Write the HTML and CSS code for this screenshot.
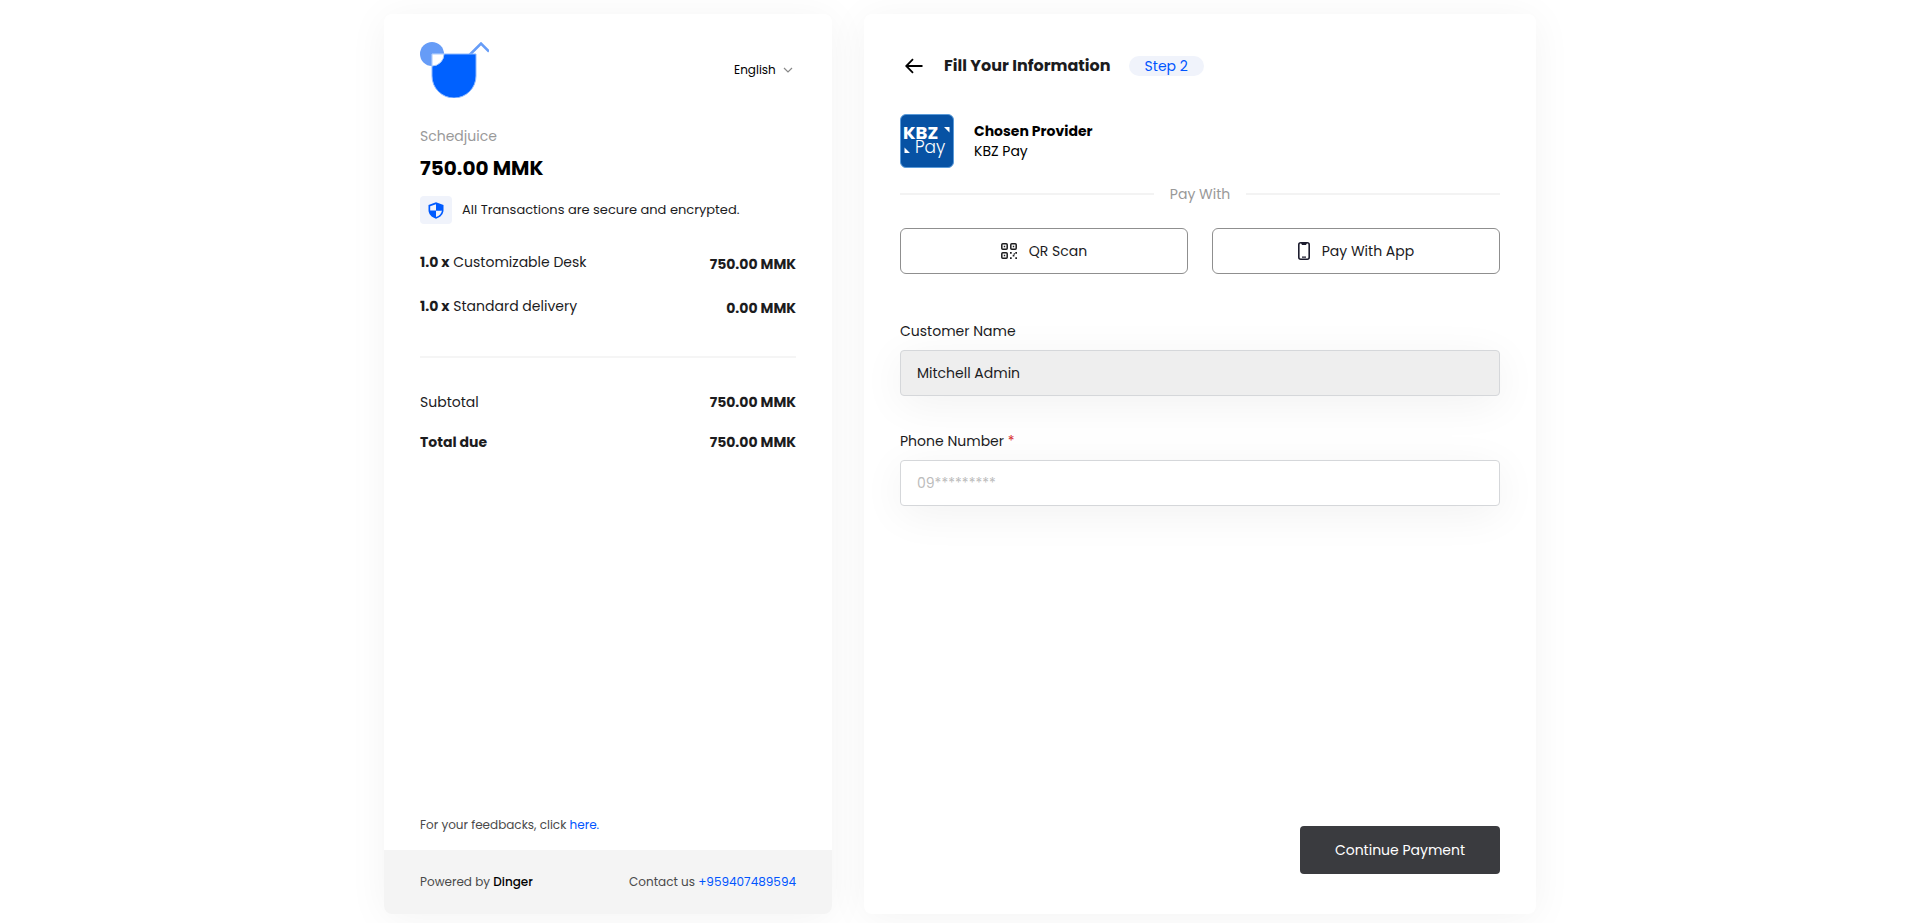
FILE: index.html
```html
<!DOCTYPE html>
<html lang="en">
<head>
<meta charset="utf-8">
<meta name="viewport" content="width=device-width, initial-scale=1">
<title>Checkout</title>
<link rel="stylesheet" href="styles.css">
</head>
<body>
<div class="checkout">
  <aside class="card summary">
    <div class="summary-main">
      <header class="summary-head">
        <svg class="brand" viewBox="0 0 69 56" role="img" aria-label="Schedjuice">
          <circle cx="12" cy="12" r="12" fill="#669cf7"/>
          <path d="M49 13.500 61 1.500 69 9.500" fill="none" stroke="#669cf7" stroke-width="2.500"/>
          <path d="M12 12H56V34a22 22 0 0 1-44 0Z" fill="#0061ff" stroke="#8db9ff" stroke-width="1"/>
          <path d="M12 12H24A12 12 0 0 1 12 24Z" fill="#fff" stroke="#a8c8fb" stroke-width="1"/>
        </svg>
        <div class="language">
          <select class="language-select" aria-label="Language"><option>English</option></select>
          <svg class="language-arrow" viewBox="0 0 10 10" aria-hidden="true"><path d="M1 3l4 4 4-4" fill="none" stroke="#888" stroke-width="1.200"/></svg>
        </div>
      </header>
      <p class="merchant">Schedjuice</p>
      <p class="amount">750.00 MMK</p>
      <div class="secure">
        <span class="secure-badge">
          <svg class="secure-icon" viewBox="0 0 16 17" aria-hidden="true"><path d="M8 .3 15.500 3V8c0 4-3 7.300-7.500 8.700C3.500 15.300.500 12 .500 8V3Z" fill="#005bff"/><path d="M8 2.200V8.500H14C13.500 11.500 11.500 13.800 8 15V8.500H2.200V4.200Z" fill="#f0f3fb"/><path d="M8 2.200V8.500H13.800V4.200Z" fill="#005bff"/></svg>
        </span>
        <span class="secure-text">All Transactions are secure and encrypted.</span>
      </div>
      <ul class="items">
        <li class="row"><span><b>1.0 x</b> Customizable Desk</span><b class="item-price">750.00 MMK</b></li>
        <li class="row"><span><b>1.0 x</b> Standard delivery</span><b class="item-price">0.00 MMK</b></li>
      </ul>
      <hr class="rule">
      <div class="totals">
        <div class="row"><span>Subtotal</span><b>750.00 MMK</b></div>
        <div class="row"><b>Total due</b><b>750.00 MMK</b></div>
      </div>
      <p class="feedback">For your feedbacks, click <a class="link" href="#">here.</a></p>
    </div>
    <footer class="summary-foot">
      <span>Powered by <strong class="dinger">Dinger</strong></span>
      <span>Contact us <a class="link" href="tel:+959407489594">+959407489594</a></span>
    </footer>
  </aside>

  <main class="card details">
    <header class="details-head">
      <button class="back" type="button" aria-label="Back">
        <svg class="back-icon" viewBox="0 0 18 16" aria-hidden="true"><path d="M17.500 8H1.500M8 1.200 1.200 8 8 14.800" fill="none" stroke="#000" stroke-width="1.800"/></svg>
      </button>
      <h1 class="title">Fill Your Information</h1>
      <span class="step">Step 2</span>
    </header>
    <section class="provider">
      <svg class="provider-logo" viewBox="0 0 54 54" role="img" aria-label="KBZ Pay">
        <rect x=".5" y=".5" width="53" height="53" rx="5.500" fill="#0752a4" stroke="#5b9bd9"/>
        <text class="logo-kbz" x="3" y="25">KBZ</text>
        <text class="logo-pay" x="15" y="39">Pay</text>
        <path d="M44 13H49.500V18.500ZM4.500 33.500 10 39H4.500Z" fill="#fff"/>
      </svg>
      <div>
        <h2 class="provider-title">Chosen Provider</h2>
        <p class="provider-name">KBZ Pay</p>
      </div>
    </section>
    <div class="divider">Pay With</div>
    <div class="methods">
      <button class="method" type="button">
        <svg class="qr-icon" viewBox="0 0 16 16" aria-hidden="true">
          <g fill="none" stroke="#1c1c1e" stroke-width="1.500"><rect x=".8" y=".8" width="5.400" height="5.400" rx="1"/><rect x="9.800" y=".8" width="5.400" height="5.400" rx="1"/><rect x=".8" y="9.800" width="5.400" height="5.400" rx="1"/></g>
          <path d="M2.800 2.800h1.400v1.400H2.800ZM11.800 2.800h1.400v1.400h-1.400ZM2.800 11.800h1.400v1.400H2.800ZM9 9h1.700v1.700H9ZM14.300 9H16v1.700h-1.700ZM11.700 11.700h1.700v1.700h-1.700ZM9 14.300h1.700V16H9ZM14.300 14.300H16V16h-1.700ZM12.700 10.300h1.300v1.300h-1.300Z" fill="#1c1c1e"/>
        </svg>
        QR Scan
      </button>
      <button class="method" type="button">
        <svg class="phone-icon" viewBox="0 0 12 18" aria-hidden="true"><rect x=".8" y=".8" width="10.400" height="16.400" rx="2" fill="none" stroke="#1c1c2e" stroke-width="1.600"/><path d="M3 1h6l-1 2H4ZM4 14.500h4v1.300H4Z" fill="#1c1c2e"/></svg>
        Pay With App
      </button>
    </div>
    <form class="form">
      <div class="field">
        <label class="label" for="name">Customer Name</label>
        <input class="input" id="name" type="text" value="Mitchell Admin" disabled>
      </div>
      <div class="field">
        <label class="label" for="phone">Phone Number <span class="required">*</span></label>
        <input class="input" id="phone" type="tel" placeholder="09*********">
      </div>
      <button class="submit" type="submit">Continue Payment</button>
    </form>
  </main>
</div>
</body>
</html>
```
FILE: styles.css
```css
* { box-sizing: border-box; }
body {
  margin: 0;
  background: #fff;
  color: #1c1c1e;
  font: 14px/20px Poppins, Inter, "Liberation Sans", sans-serif;
}
p, h1, h2, ul { margin: 0; padding: 0; }
button, input, select { font: inherit; color: inherit; }
b { font-weight: 700; }
.checkout {
  display: grid;
  grid-template-columns: 2fr 3fr;
  gap: 32px;
  width: 60%;
  min-height: 100vh;
  margin: 0 auto;
  padding: 14px 0 9px;
}
.card {
  display: flex;
  flex-direction: column;
  background: #fff;
  border-radius: 8px;
  box-shadow: 0 4px 40px rgba(0, 0, 0, .05);
}
.summary-main {
  display: flex;
  flex: 1;
  flex-direction: column;
  padding: 28px 36px 15px;
}
.summary-head {
  display: flex;
  align-items: center;
  justify-content: space-between;
}
.brand { width: 69px; height: 56px; }
.language { display: grid; align-items: center; font-size: 12px; color: #000; }
.language-select {
  grid-area: 1 / 1;
  appearance: none;
  border: 0;
  background: none;
  padding: 0 20px 0 0;
}
.language-arrow {
  grid-area: 1 / 1;
  justify-self: end;
  width: 10px;
  height: 10px;
  margin-right: 3px;
  pointer-events: none;
}
.merchant { margin-top: 28px; color: #999; }
.amount { margin-top: 8px; font-size: 20px; line-height: 28px; font-weight: 700; color: #000; }
.secure { display: flex; align-items: center; gap: 10px; margin-top: 14px; font-size: 13px; }
.secure-badge {
  display: grid;
  place-items: center;
  width: 32px;
  height: 28px;
  border-radius: 4px;
  background: #f0f3fb;
}
.secure-icon { width: 16px; height: 17px; }
.items { display: grid; gap: 22px; margin-top: 28px; list-style: none; }
.row { display: flex; justify-content: space-between; }
.item-price { padding-top: 2px; }
.rule { width: 100%; height: 2px; margin: 38px 0 34px; border: 0; background: #f5f5f5; }
.totals { display: grid; gap: 20px; }
.feedback { margin-top: auto; font-size: 12px; color: #4a4a4a; }
.link { color: #0055ff; text-decoration: none; }
.summary-foot {
  display: flex;
  align-items: center;
  justify-content: space-between;
  min-height: 64px;
  padding: 0 36px;
  border-radius: 0 0 8px 8px;
  background: #f4f4f4;
  color: #4a4a4a;
  font-size: 12px;
}
.dinger { font-weight: 500; color: #000; }
.details { padding: 40px 36px; }
.details-head { display: flex; align-items: center; height: 24px; }
.back { display: grid; place-items: center; width: 28px; height: 24px; padding: 0; border: 0; background: none; }
.back-icon { width: 18px; height: 16px; }
.title { margin-left: 16px; font-size: 16px; font-weight: 700; }
.step { margin-left: 18px; padding: 0 16px; border-radius: 10px; background: #f0f3fb; color: #0055ff; }
.provider { display: flex; align-items: center; gap: 20px; margin-top: 36px; color: #000; }
.provider-logo { width: 54px; height: 54px; }
.logo-kbz { font: 700 18px Poppins, sans-serif; fill: #fff; }
.logo-pay { font: 300 17px Poppins, sans-serif; fill: #fff; }
.provider-title { font-size: 14px; font-weight: 700; }
.divider { display: flex; align-items: center; gap: 16px; margin-top: 16px; color: #999; }
.divider::before, .divider::after { content: ""; flex: 1; height: 2px; background: #f3f3f3; }
.methods { display: grid; grid-template-columns: 1fr 1fr; gap: 24px; margin-top: 24px; }
.method {
  display: flex;
  align-items: center;
  justify-content: center;
  gap: 12px;
  height: 46px;
  border: 1px solid #8f8f8f;
  border-radius: 6px;
  background: #fff;
}
.qr-icon { width: 16px; height: 16px; }
.phone-icon { width: 12px; height: 18px; }
.form { display: flex; flex: 1; flex-direction: column; margin-top: 47px; }
.field { display: grid; gap: 9px; margin-bottom: 35px; }
.input {
  width: 100%;
  height: 46px;
  padding: 0 16px;
  border: 1px solid #d5d7da;
  border-radius: 4px;
  background: #fff;
  box-shadow: 0 8px 44px rgba(0, 0, 0, .06);
}
.input:disabled { background: #eee; color: #1c1c1e; }
.input::placeholder { color: #bbb; }
.required { color: #d82c2c; }
.submit {
  align-self: flex-end;
  width: 200px;
  height: 48px;
  margin-top: auto;
  border: 0;
  border-radius: 4px;
  background: #3a3b3f;
  color: #fff;
}
```
